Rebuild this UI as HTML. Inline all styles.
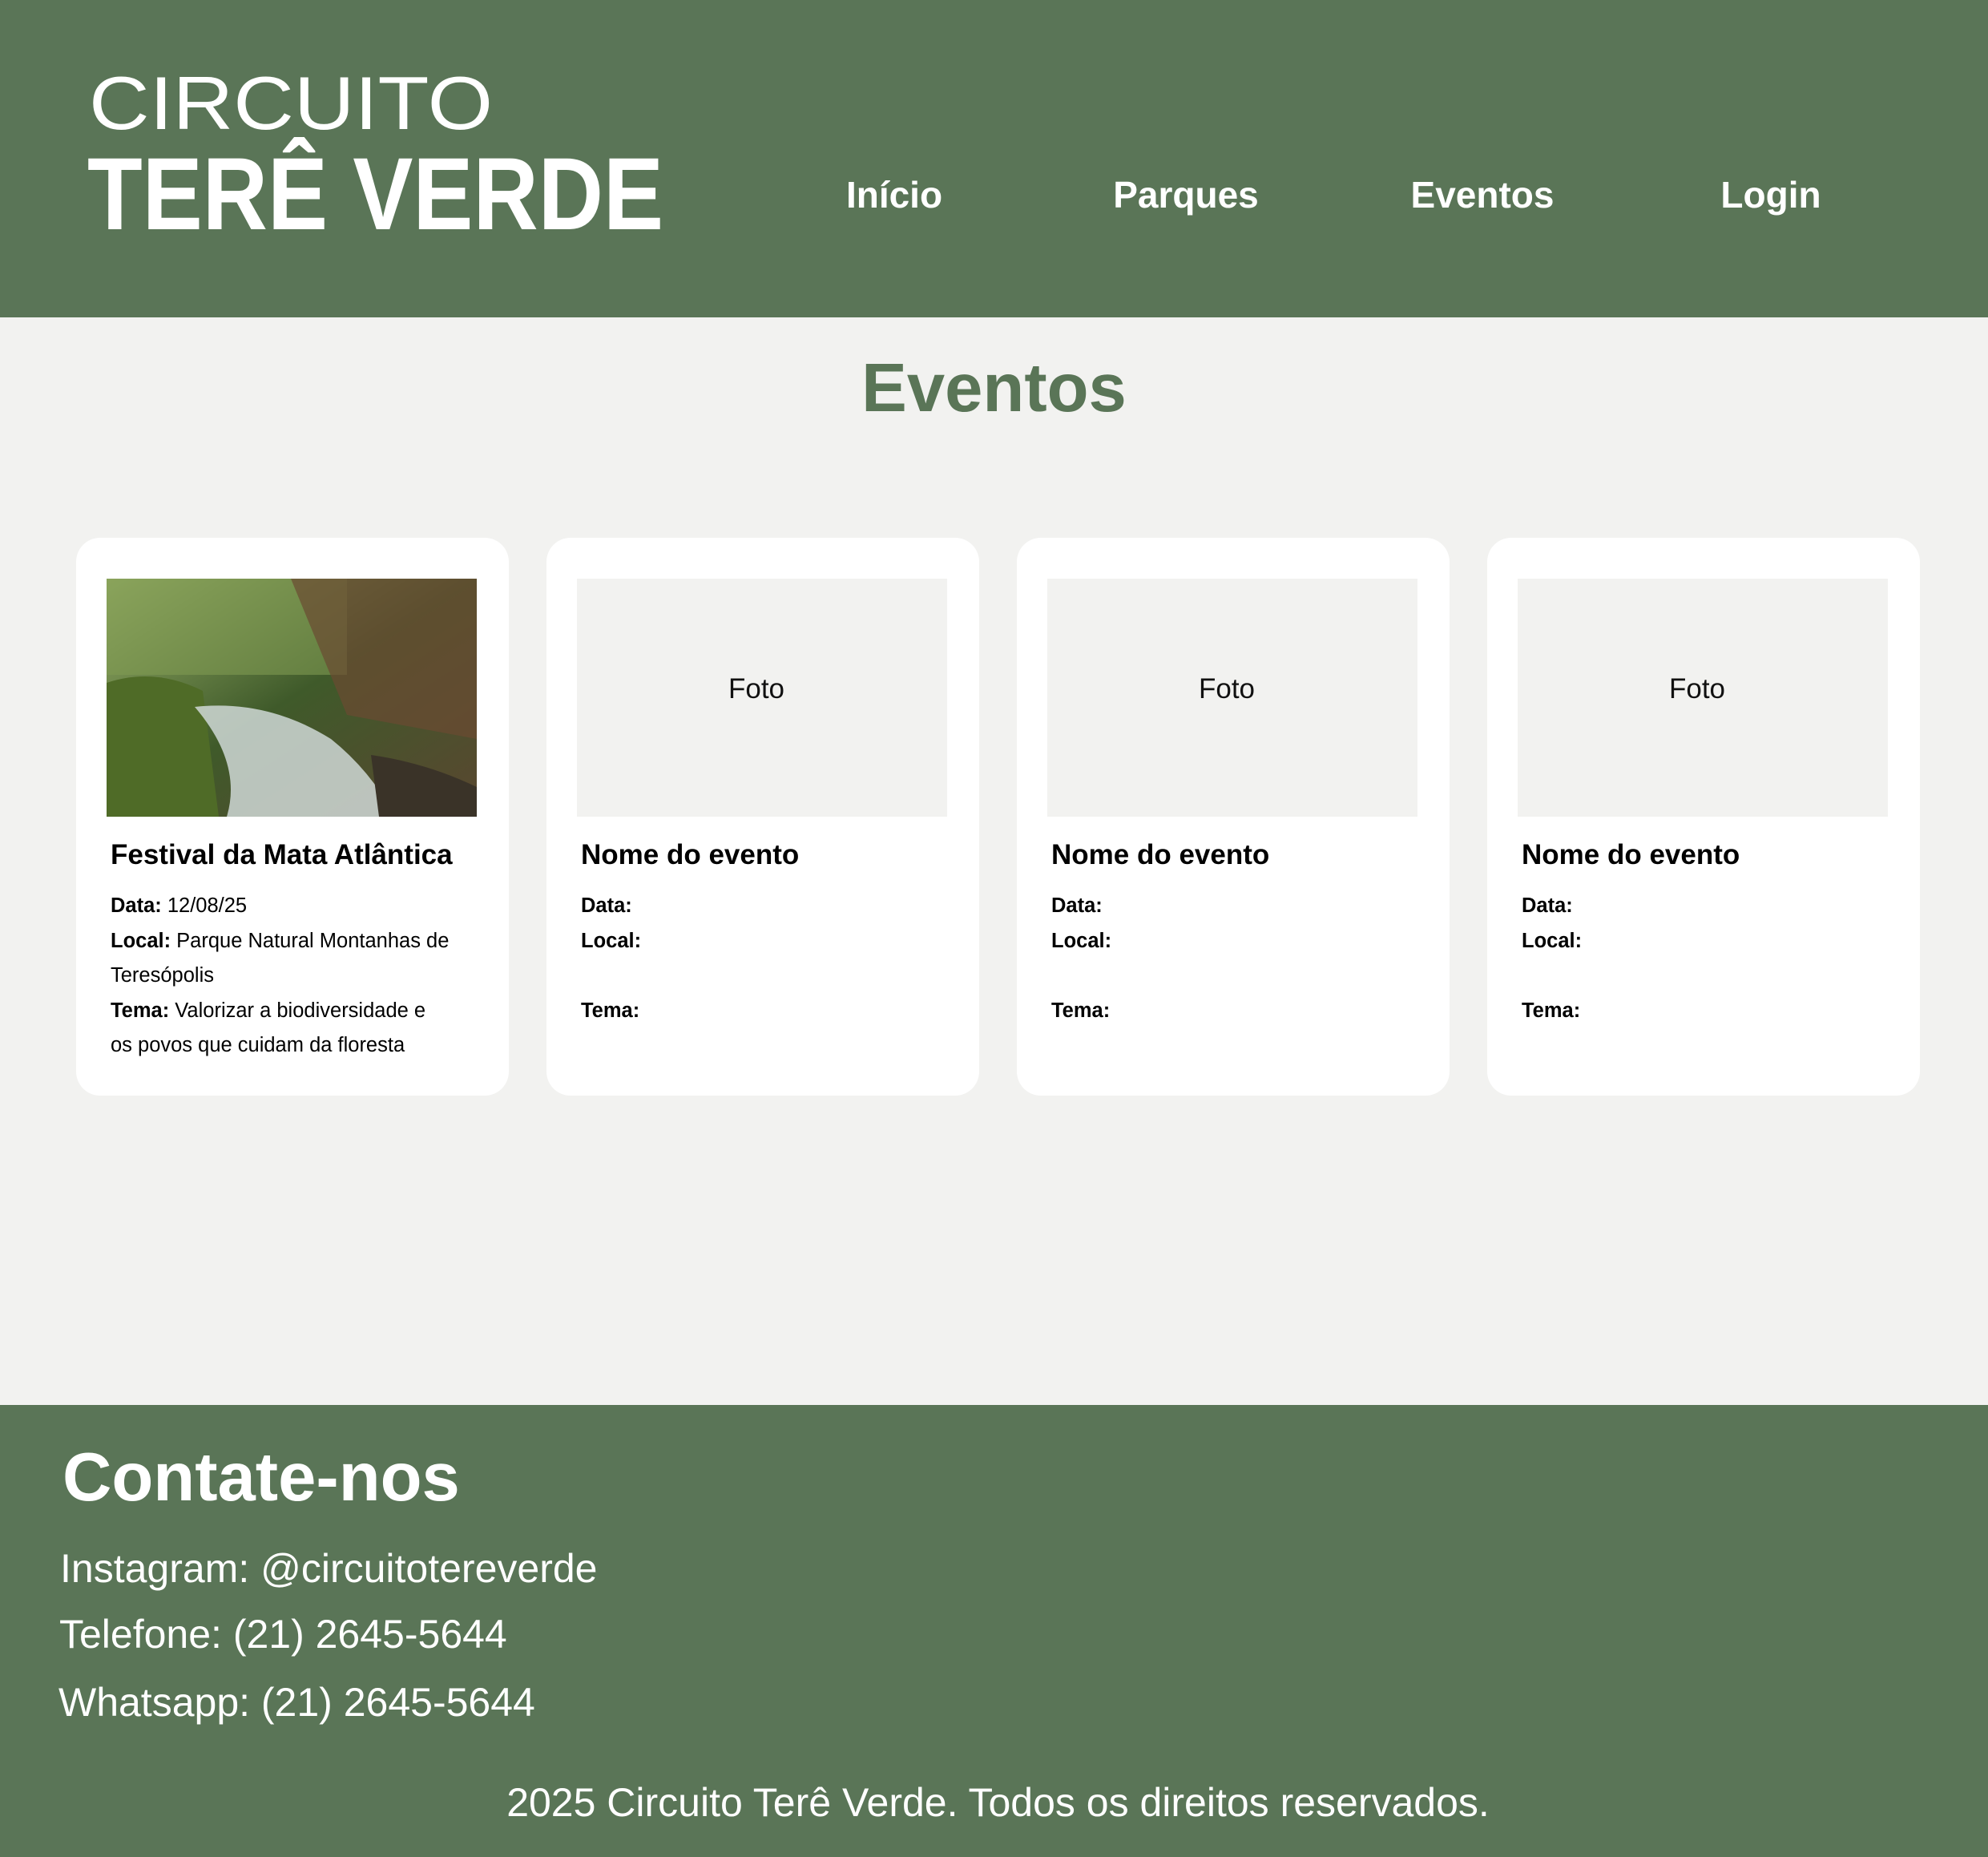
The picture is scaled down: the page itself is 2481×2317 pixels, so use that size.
<!DOCTYPE html>
<html><head><meta charset="utf-8"><style>
*{margin:0;padding:0;box-sizing:border-box}
body{width:2481px;height:2317px;background:#f2f2f0;font-family:"Liberation Sans",Arial,sans-serif;position:relative;overflow:hidden}
header{position:absolute;left:0;top:0;width:2481px;height:396px;background:#5a7557}
.nav{position:absolute;top:216px;color:#fff;font-weight:bold;font-size:46px;transform:translateX(-50%);white-space:nowrap}
h1{position:absolute;top:436px;width:100%;text-align:center;color:#5a7557;font-size:85px;font-weight:bold}
.card{position:absolute;top:671px;width:540px;height:696px;background:#fff;border-radius:30px}
.ph{position:absolute;left:38px;top:51px;width:462px;height:297px;background:#f2f2f0;padding-right:14px;text-align:center;line-height:275px;font-size:35px;color:#111}
.t{position:absolute;left:43px;font-size:35px;font-weight:bold;color:#000}
.info{position:absolute;left:43px;font-size:25.5px;line-height:43.5px;color:#000}
footer{position:absolute;left:0;top:1753px;width:2481px;height:564px;background:#5a7557;color:#fff}
</style></head><body>
<header>
<svg width="900" height="396" style="position:absolute;left:0;top:0">
<text x="111" y="161" fill="#fff" font-family="Liberation Sans" font-size="94" textLength="504" lengthAdjust="spacingAndGlyphs">CIRCUITO</text>
<text x="109" y="286" fill="#fff" font-family="Liberation Sans" font-weight="bold" font-size="128" textLength="719" lengthAdjust="spacingAndGlyphs">TERÊ VERDE</text>
</svg>
<div class="nav" style="left:1116px">Início</div>
<div class="nav" style="left:1480px">Parques</div>
<div class="nav" style="left:1850px">Eventos</div>
<div class="nav" style="left:2210px">Login</div>
</header>
<h1>Eventos</h1>

<div class="card" style="left:95px">
<svg style="position:absolute;left:38px;top:51px" width="462" height="297" viewBox="0 0 462 297">
<defs><linearGradient id="g" x1="0" y1="0" x2="1" y2="1"><stop offset="0" stop-color="#9bb36a"/><stop offset=".5" stop-color="#3f5a2a"/><stop offset="1" stop-color="#5a4630"/></linearGradient></defs>
<rect width="462" height="297" fill="url(#g)"/>
<rect x="0" y="0" width="300" height="120" fill="#7f9a52" opacity=".6"/>
<path d="M230 0 L462 0 L462 200 L300 170 Z" fill="#6b4a32" opacity=".7"/>
<path d="M0 130 Q60 110 120 140 L140 297 L0 297Z" fill="#4f6b27"/>
<path d="M110 160 Q200 150 280 200 Q330 240 360 297 L150 297 Q170 230 110 160Z" fill="#cfd8d6" opacity=".85"/>
<path d="M330 220 Q400 230 462 260 L462 297 L340 297Z" fill="#3a3328"/>
</svg>
<div class="t" style="top:376px;left:43px">Festival da Mata Atlântica</div>
<div class="info" style="top:438px"><b>Data:</b> 12/08/25<br><b>Local:</b> Parque Natural Montanhas de<br>Teresópolis<br><b>Tema:</b> Valorizar a biodiversidade e<br>os povos que cuidam da floresta</div>
</div>

<div class="card" style="left:682px"><div class="ph">Foto</div><div class="t" style="top:376px">Nome do evento</div><div class="info" style="top:438px"><b>Data:</b><br><b>Local:</b><br><br><b>Tema:</b></div></div>
<div class="card" style="left:1269px"><div class="ph">Foto</div><div class="t" style="top:376px">Nome do evento</div><div class="info" style="top:438px"><b>Data:</b><br><b>Local:</b><br><br><b>Tema:</b></div></div>
<div class="card" style="left:1856px"><div class="ph">Foto</div><div class="t" style="top:376px">Nome do evento</div><div class="info" style="top:438px"><b>Data:</b><br><b>Local:</b><br><br><b>Tema:</b></div></div>

<footer>
<div style="position:absolute;left:78px;top:42px;font-size:85px;font-weight:bold">Contate-nos</div>
<div style="position:absolute;left:75px;top:175px;font-size:50px">Instagram: @circuitotereverde</div>
<div style="position:absolute;left:74px;top:257px;font-size:50px">Telefone: (21) 2645-5644</div>
<div style="position:absolute;left:73px;top:342px;font-size:50px">Whatsapp: (21) 2645-5644</div>
<div style="position:absolute;left:0;width:100%;top:467px;text-align:center;font-size:50px;padding-left:10px">2025 Circuito Terê Verde. Todos os direitos reservados.</div>
</footer>
</body></html>
